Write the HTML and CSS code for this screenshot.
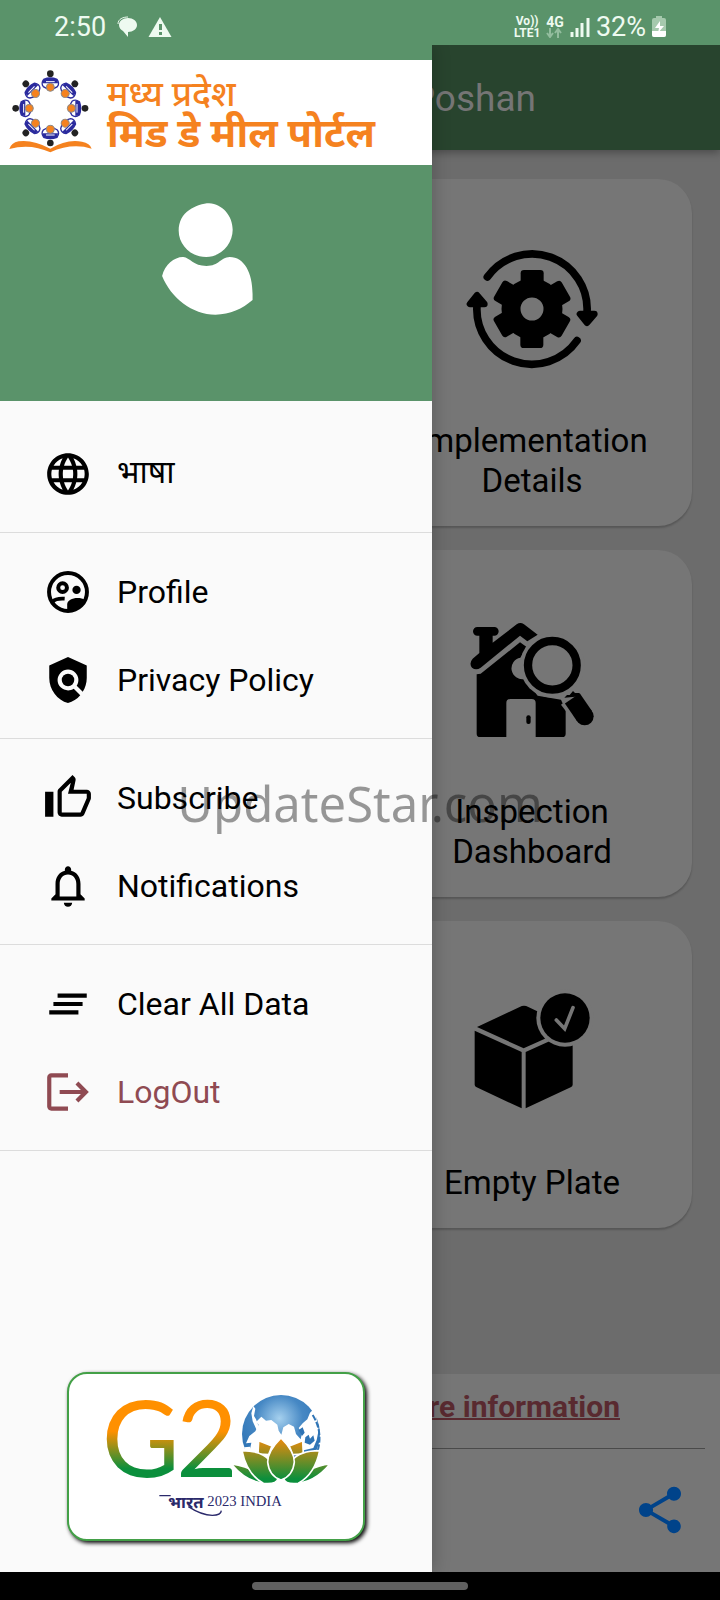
FILE: index.html
```
<!DOCTYPE html>
<html lang="en">
<head>
  <meta charset="UTF-8">
  <meta name="viewport" content="width=device-width, initial-scale=1.0">
  <title>Poshan</title>
  <link rel="stylesheet" href="styles.css">
</head>
<body>
  <!-- Status bar -->
  <div class="status-bar">
    <div class="status-left">
      <span class="clock">2:50</span>
      <svg class="status-icon" viewBox="0 0 22 22"><path d="M2 8C2 3 7 1 12 1" fill="none" stroke="#eefaf0" stroke-width="1"/><path d="M12 2c5 0 9 3 9 7s-4 7-9 7v5l-5-6c-2-1-4-3-4-6 0-4 4-7 9-7z" fill="#eefaf0"/></svg>
      <svg class="status-icon wide" viewBox="0 0 24 22"><path d="M12 1l11.500 20H.5z" fill="#eefaf0"/><path d="M11 8h3v6h-3zM11 16h3v3h-3z" fill="#5a936a"/></svg>
    </div>
    <div class="status-right">
      <span class="net">Vo))<br>LTE1</span>
      <span class="net net-4g">4G
        <svg viewBox="0 0 16 10"><path d="M4 0v8M1 5l3 4 3-4M12 10V2M9 5l3-4 3 4" fill="none" stroke="#93bd9e" stroke-width="2"/></svg>
      </span>
      <svg class="signal" viewBox="0 0 20 20"><path d="M2 15v5M7 11v9M12 6v14M18 1v19" stroke="#eefaf0" stroke-width="3"/></svg>
      <span class="percent">32%</span>
      <svg class="battery" viewBox="0 0 14 21"><path d="M4 0h6v2h2a2 2 0 0 1 2 2v15a2 2 0 0 1-2 2H2a2 2 0 0 1-2-2V4a2 2 0 0 1 2-2h2z" fill="#a5c9ad"/><path d="M0 15h14v4a2 2 0 0 1-2 2H2a2 2 0 0 1-2-2z" fill="#fff"/><path d="M8 5l-5 7h4l-1 5 6-7H8z" fill="#fff"/></svg>
    </div>
  </div>

  <div class="screen">
    <!-- Home page -->
    <header class="app-bar"><h1>Poshan</h1></header>

    <main class="cards">
      <a class="card" href="#">
        <svg viewBox="187 204 420 420">
          <g fill="none" stroke="#000" stroke-width="23" stroke-linecap="round">
            <path d="M263 318A165 165 0 0 1 562 425M532 509A165 165 0 0 1 232 403"/>
          </g>
          <path d="M541 429h43l-22 26zM211 399h43l-22-26z" stroke="#000" stroke-width="20" stroke-linejoin="round"/>
          <circle cx="397" cy="414" r="63" fill="none" stroke="#000" stroke-width="57"/>
          <g>
            <rect x="363" y="297" width="69" height="60" rx="10"/>
            <rect x="363" y="297" width="69" height="60" rx="10" transform="rotate(60 397 414)"/>
            <rect x="363" y="297" width="69" height="60" rx="10" transform="rotate(120 397 414)"/>
            <rect x="363" y="297" width="69" height="60" rx="10" transform="rotate(180 397 414)"/>
            <rect x="363" y="297" width="69" height="60" rx="10" transform="rotate(240 397 414)"/>
            <rect x="363" y="297" width="69" height="60" rx="10" transform="rotate(300 397 414)"/>
          </g>
        </svg>
        <span>Implementation Details</span>
      </a>
      <a class="card" href="#">
        <svg viewBox="187 207 420 420">
          <path d="M231 258h53a12 12 0 0 1 0 26h-5v21l72-55q11-8 22 0l41 31-31 20-22-17-118 96q-14 10-26 0-10-13 2-27l20-17v-52h-6a12 12 0 0 1 0-26z"/>
          <path d="M231 400l12-2 118-94 20 14-19 32a32 32 0 1 0 12 64l40 50 70 12 14 32v70q0 10-10 10h-80V486q0-12-12-12h-64q-12 0-12 12v102h-79q-10 0-10-10z"/>
          <rect x="380" y="523" width="13" height="26" rx="6"/>
          <circle cx="458" cy="373" r="97" fill="#767676"/>
          <circle cx="458" cy="373" r="73" fill="none" stroke="#000" stroke-width="25"/>
          <path d="M512 470l43 57" stroke="#767676" stroke-width="70"/>
          <path d="M518 472l37 54" stroke="#000" stroke-width="54"/>
          <circle cx="555" cy="526" r="27"/>
          <path d="M494 470l8-8 8 0 10-12 6 6 12 0 6 10z"/>
        </svg>
        <span>Inspection Dashboard</span>
      </a>
      <a class="card" href="#">
        <svg viewBox="187 210 420 420">
          <path d="M232 348l128-60q13-7 26 0l80 38v44l-94 42z"/>
          <path d="M225 359l141 64v169l-135-63q-6-3-6-8zM378 423l141-64v162q0 5-6 8l-135 63z"/>
          <circle cx="496" cy="321" r="86" fill="#767676"/>
          <circle cx="496" cy="321" r="74"/>
          <path d="M470 327l25 26 25-63" fill="none" stroke="#767676" stroke-width="11" stroke-linecap="round"/>
        </svg>
        <span>Empty Plate</span>
      </a>
    </main>

    <footer class="footer">
      <a class="more" href="#">more information</a>
      <button class="share" aria-label="Share">
        <svg viewBox="0 0 24 24"><path d="M18 16.080c-.76 0-1.440.3-1.960.77L8.910 12.700c.05-.23.09-.46.09-.7s-.04-.47-.09-.7l7.050-4.110c.54.5 1.250.81 2.040.81 1.660 0 3-1.340 3-3s-1.340-3-3-3-3 1.340-3 3c0 .24.04.47.09.7L8.040 9.810C7.500 9.310 6.790 9 6 9c-1.660 0-3 1.340-3 3s1.340 3 3 3c.79 0 1.500-.31 2.040-.81l7.120 4.160c-.05.21-.08.43-.08.65 0 1.610 1.310 2.920 2.920 2.920 1.610 0 2.920-1.310 2.920-2.920s-1.310-2.920-2.920-2.920z"/></svg>
      </button>
    </footer>

    <!-- Side drawer -->
    <aside class="drawer">
      <div class="brand">
        <svg class="emblem" viewBox="24 204 258 258">
          <defs>
            <g id="pupil">
              <circle cx="151" cy="221" r="10" fill="#222"/>
              <path d="M130 236q21-8 42 0l2 14h-46z" fill="#2b2b9e"/>
              <path d="M131 238q-9 12-1 22l11 6M171 238q9 12 1 22l-11 6" fill="none" stroke="#2b2b9e" stroke-width="4"/>
              <path d="M138 245h26" stroke="#fff" stroke-width="3"/>
              <circle cx="151" cy="262" r="12" fill="#f5821f" stroke="#8a8a8a" stroke-width="3"/>
            </g>
          </defs>
          <use href="#pupil"/>
          <use href="#pupil" transform="rotate(45 151 325)"/>
          <use href="#pupil" transform="rotate(90 151 325)"/>
          <use href="#pupil" transform="rotate(135 151 325)"/>
          <use href="#pupil" transform="rotate(180 151 325)"/>
          <use href="#pupil" transform="rotate(225 151 325)"/>
          <use href="#pupil" transform="rotate(270 151 325)"/>
          <use href="#pupil" transform="rotate(315 151 325)"/>
          <path d="M28 447q5-18 28-23 42-6 95 22 50-30 95-21 24 4 29 21-60-18-124 11-60-28-123-10z" fill="#f5821f"/>
        </svg>
        <div class="brand-text" lang="hi">
          <span class="state">मध्य प्रदेश</span>
          <span class="portal">मिड डे मील पोर्टल</span>
        </div>
      </div>

      <div class="account">
        <svg viewBox="66 68 274 338">
          <path d="M208 69c40 2 71 38 71 80s-34 82-80 82-83-36-83-80c0-26 12-50 32-62 18-12 42-20 60-20z" fill="#fff"/>
          <path d="M66 288c8-34 38-58 64-57 20 2 30 27 70 27 38 0 42-26 70-27 44 0 69 48 69 112v18c-30 26-68 44-112 44-70 0-135-52-161-117z" fill="#fff"/>
        </svg>
      </div>

      <nav class="menu">
        <ul class="group first">
          <li><a href="#">
            <svg viewBox="0 0 24 24"><path d="M11.990 2C6.470 2 2 6.480 2 12s4.470 10 9.990 10C17.520 22 22 17.520 22 12S17.520 2 11.990 2zm6.930 6h-2.950c-.32-1.250-.78-2.450-1.380-3.560 1.840.63 3.370 1.910 4.330 3.560zM12 4.040c.83 1.200 1.480 2.530 1.910 3.960h-3.820c.43-1.430 1.080-2.760 1.910-3.960zM4.260 14C4.100 13.360 4 12.690 4 12s.1-1.360.26-2h3.380c-.08.66-.14 1.320-.14 2 0 .68.06 1.340.14 2H4.260zm.82 2h2.950c.32 1.250.78 2.450 1.380 3.560-1.840-.63-3.370-1.900-4.330-3.560zm2.950-8H5.080c.96-1.660 2.490-2.930 4.330-3.560C8.810 5.550 8.350 6.750 8.030 8zM12 19.960c-.83-1.200-1.480-2.530-1.910-3.960h3.820c-.43 1.430-1.080 2.760-1.910 3.960zM14.340 14H9.660c-.09-.66-.16-1.320-.16-2 0-.68.07-1.350.16-2h4.680c.09.65.16 1.320.16 2 0 .68-.07 1.340-.16 2zm.25 5.560c.6-1.110 1.060-2.310 1.380-3.560h2.950c-.96 1.650-2.490 2.930-4.330 3.560zM16.360 14c.08-.66.14-1.320.14-2 0-.68-.06-1.340-.14-2h3.380c.16.64.26 1.310.26 2s-.1 1.360-.26 2h-3.380z"/></svg>
            <span class="hindi" lang="hi">भाषा</span></a></li>
        </ul>
        <ul class="group">
          <li><a href="#">
            <svg viewBox="0 0 24 24"><circle cx="12" cy="12" r="9.100" fill="none" stroke="#000" stroke-width="1.900"/><circle cx="9.400" cy="9.900" r="2.100" fill="none" stroke="#000" stroke-width="1.900"/><circle cx="16.100" cy="11" r="2"/><path d="M4.500 16.600c1-1 3-1.600 5.900-1.400" fill="none" stroke="#000" stroke-width="1.800"/><path d="M11.600 21.500V18c0-1.900 2.400-3.100 5-3.100 1.300 0 2.600.3 3.600.9-1.200 3.700-4.700 5.700-8.600 5.700z"/></svg>
            <span>Profile</span></a></li>
          <li><a href="#">
            <svg viewBox="0 0 24 24"><path d="M21 5l-9-4-9 4v6c0 5.550 3.840 10.740 9 12 2.300-.56 4.330-1.900 5.880-3.710l-3.120-3.120c-1.940 1.290-4.580 1.070-6.290-.64-1.950-1.950-1.950-5.120 0-7.070 1.950-1.950 5.120-1.950 7.070 0 1.710 1.710 1.920 4.350.64 6.290l2.900 2.900C20.290 15.690 21 13.380 21 11V5z"/><circle cx="12" cy="12" r="3"/></svg>
            <span>Privacy Policy</span></a></li>
        </ul>
        <ul class="group">
          <li><a href="#">
            <svg viewBox="0 0 24 24"><path d="M9 21h9c.83 0 1.540-.5 1.840-1.220l3.020-7.050c.09-.23.14-.47.14-.73v-2c0-1.100-.9-2-2-2h-6.310l.95-4.570.03-.32c0-.41-.17-.79-.44-1.060L14.170 1 7.580 7.590C7.220 7.950 7 8.450 7 9v10c0 1.100.9 2 2 2zM9 9l4.340-4.340L12 10h9v2l-3 7H9V9zM1 9h4v12H1z"/></svg>
            <span>Subscribe</span></a></li>
          <li><a href="#">
            <svg viewBox="0 0 24 24"><path d="M12 22c1.100 0 2-.9 2-2h-4c0 1.100.9 2 2 2zm6-6v-5c0-3.070-1.630-5.640-4.500-6.320V4c0-.83-.67-1.500-1.500-1.500s-1.500.67-1.500 1.500v.68C7.640 5.360 6 7.920 6 11v5l-2 2v1h16v-1l-2-2zm-2 1H8v-6c0-2.480 1.510-4.500 4-4.500s4 2.020 4 4.500v6z"/></svg>
            <span>Notifications</span></a></li>
        </ul>
        <ul class="group">
          <li><a href="#">
            <svg viewBox="0 0 24 24"><path d="M5 13h14v-2H5v2zm-2 4h14v-2H3v2zM7 7v2h14V7H7z"/></svg>
            <span>Clear All Data</span></a></li>
          <li><a class="logout" href="#">
            <svg viewBox="0 0 24 24"><path d="M12 5V3H4c-1.100 0-2 .9-2 2v14c0 1.100.9 2 2 2h8v-2H4V5zM17 7l-1.400 1.400 2.600 2.600H8v2h10.200l-2.600 2.600L17 17l5-5z"/></svg>
            <span>LogOut</span></a></li>
        </ul>
      </nav>

      <div class="g20">
        <svg viewBox="87 72 882 495">
          <defs>
            <linearGradient id="flag" gradientUnits="userSpaceOnUse" x1="0" y1="150" x2="0" y2="384">
              <stop offset="0.400" stop-color="#ff9000"/>
              <stop offset="0.880" stop-color="#0b8f3c"/>
            </linearGradient>
            <linearGradient id="petal" gradientUnits="userSpaceOnUse" x1="0" y1="265" x2="0" y2="400">
              <stop offset="0" stop-color="#ef8a0c"/>
              <stop offset="0.900" stop-color="#0b8f3c"/>
            </linearGradient>
            <radialGradient id="sea" cx="0.480" cy="0.300" r="0.600">
              <stop offset="0" stop-color="#a5d0ee"/>
              <stop offset="0.500" stop-color="#4688c4"/>
              <stop offset="1" stop-color="#2f74b5"/>
            </radialGradient>
          </defs>
          <text class="g20-text" x="185" y="381" fill="url(#flag)">G</text>
          <text class="g20-text" x="408" y="381" fill="url(#flag)">2</text>
          <circle cx="723" cy="252" r="117" fill="url(#sea)"/>
          <g fill="#fff">
            <path d="M640 168l6 8-4 22 6 10 10 26-8 6-12-26-4-24z"/>
            <path d="M664 200l14 12 16-2 18 14 4 18 8 12 6-22 16-10 16 8 6 22 14 16 4-18-10-16 12-14 14-12 8-20 12-12 8 30 6 34-6 30-10 24-170 40-20-36 4-20-16 2 10-22 18-14 10-20-8-8z"/>
            <path d="M612 292l18-2 10 26-14 10z"/>
          </g>
          <path d="M796 262l10-8 4 12 10-10 4 16-14 12-16-6zM776 240l12-8 6 16-8 10z" fill="#2f74b5"/>
          <path d="M818 195q32 51 14 111" fill="none" stroke="#2f74b5" stroke-width="6" stroke-dasharray="18 5"/>
          <g fill="url(#petal)" stroke="#fff" stroke-width="5">
            <path d="M656 272l40 16-10 26-32-2zM788 272l-40 16 10 26 32-2z"/>
            <path d="M574 342q70 8 112 58-62 2-112-58zM870 342q-70 8-112 58 62 2 112-58z"/>
            <path d="M606 302q60 0 84 30 10 20 24 54-4 18-44 14-50-28-64-98zM839 302q-60 0-84 30-10 20-24 54 4 18 44 14 50-28 64-98z"/>
            <path d="M723 264q-40 40-40 72 4 42 40 54 36-12 40-54 0-32-40-72z"/>
          </g>
          <text class="g20-hindi" x="384" y="473">भारत</text>
          <path d="M358 437h34M445 470q40 26 72 26 26 0 27-14" fill="none" stroke="#2b2a6b" stroke-width="4"/>
          <text class="g20-sub" x="502" y="467">2023 INDIA</text>
        </svg>
      </div>
    </aside>

    <div class="watermark">UpdateStar.com</div>
  </div>

  <div class="gesture-bar"><span></span></div>
</body>
</html>
```
FILE: styles.css
```
* {
  box-sizing: border-box;
}
body {
  margin: 0;
  min-height: 100vh;
  display: flex;
  flex-direction: column;
  font-family: Roboto, "Noto Sans", sans-serif;
  background-color: #6c6c6c;
  color: #000;
}
svg {
  display: block;
}
a {
  color: inherit;
  text-decoration: none;
}
/* Status bar */
.status-bar {
  height: 45px;
  padding: 8px 54px 0;
  display: flex;
  justify-content: space-between;
  background-color: #5a936a;
  color: #eefaf0;
}
.status-left, .status-right {
  display: flex;
  align-items: center;
}
.status-left {
  gap: 10px;
}
.status-right {
  gap: 6px;
}
.clock, .percent {
  font-size: 27px;
}
.status-icon {
  width: 22px;
  height: 22px;
}
.status-icon.wide {
  width: 24px;
}
.net {
  font-size: 12px;
  line-height: 12px;
  font-weight: bold;
  text-align: center;
}
.net-4g {
  font-size: 14px;
}
.net-4g svg {
  width: 16px;
  height: 10px;
}
.signal {
  width: 20px;
  height: 20px;
}
.battery {
  width: 14px;
  height: 21px;
}
/* Home page, dimmed behind the drawer */
.screen {
  position: relative;
  flex: 1;
  display: flex;
  flex-direction: column;
  overflow: hidden;
}
.app-bar {
  height: 105px;
  padding: 2px 184px 0 0;
  display: flex;
  align-items: center;
  justify-content: flex-end;
  background-color: #28442e;
  box-shadow: 0 3px 8px rgba(0, 0, 0, 0.3);
}
.app-bar h1 {
  margin: 0;
  font-size: 37px;
  font-weight: normal;
  color: #757575;
}
.cards {
  flex: 1;
  padding: 29px 28px;
  display: grid;
  grid-template-columns: 1fr 1fr;
  align-content: start;
  gap: 24px;
}
.card {
  grid-column: 2;
  padding: 60px 24px 25px;
  display: flex;
  flex-direction: column;
  align-items: center;
  gap: 42px;
  border-radius: 34px;
  background-color: #767676;
  box-shadow: 0 2px 2px rgba(0, 0, 0, 0.2);
  font-size: 33px;
  line-height: 40px;
  text-align: center;
}
.card svg {
  width: 140px;
  height: 140px;
}
.footer {
  padding: 0 15px 34px;
  display: flex;
  flex-direction: column;
  align-items: flex-end;
  background-color: #767676;
}
.more {
  width: 100%;
  padding: 13px 85px 21px 0;
  border-bottom: 1px solid #4a4a4a;
  font-size: 30px;
  line-height: 40px;
  font-weight: bold;
  text-align: right;
  text-decoration: underline;
  text-decoration-thickness: 2px;
  color: #592a30;
}
.share {
  margin: 33px 17px 0 0;
  padding: 0;
  border: none;
  background: none;
  cursor: pointer;
}
.share svg {
  width: 56px;
  height: 56px;
  fill: #00438a;
}
/* Drawer */
.drawer {
  position: absolute;
  top: 0;
  bottom: 0;
  left: 0;
  width: 60%;
  padding-top: 15px;
  display: flex;
  flex-direction: column;
  background: linear-gradient(#5a936a 15px, #fafafa 15px);
  box-shadow: 2px 0 16px rgba(0, 0, 0, 0.2);
}
.brand {
  height: 105px;
  padding: 8px;
  display: flex;
  gap: 13px;
  background-color: #fff;
}
.emblem {
  width: 86px;
  height: 86px;
}
.brand-text {
  padding-top: 9px;
  display: flex;
  flex-direction: column;
  white-space: nowrap;
  color: #f5821f;
}
.state {
  font-size: 35px;
  line-height: 36px;
  font-weight: 500;
}
.portal {
  font-size: 40px;
  line-height: 42px;
  font-weight: bold;
}
.account {
  height: 236px;
  padding: 38px 18px 0 0;
  display: flex;
  justify-content: center;
  background-color: #5a936a;
}
.account svg {
  width: 91px;
  height: 112px;
}
.group {
  margin: 0;
  padding: 15px 0 14px;
  list-style: none;
  border-bottom: 1px solid #dcdcdc;
}
.group.first {
  padding-top: 29px;
}
.group a {
  height: 88px;
  padding-left: 43px;
  display: flex;
  align-items: center;
  gap: 24px;
  font-size: 32px;
}
.group svg {
  width: 50px;
  height: 50px;
}
.group .hindi {
  padding-bottom: 8px;
}
.group .logout {
  color: #8f4a52;
  fill: #8f4a52;
}
.g20 {
  width: 298px;
  margin: auto auto 31px;
  border: 2px solid #43a047;
  border-radius: 20px;
  background-color: #fff;
  box-shadow: 2px 2px 4px #000;
}
.g20-text {
  font-family: Lato, sans-serif;
  font-size: 320px;
}
.g20-hindi {
  font-size: 50px;
  font-weight: bold;
  fill: #2b2a6b;
}
.g20-sub {
  font-family: "Liberation Serif", serif;
  font-size: 44px;
  fill: #2b2a6b;
}
.watermark {
  position: absolute;
  top: 725px;
  left: 0;
  right: 0;
  font-family: "Noto Sans", sans-serif;
  font-size: 49px;
  text-align: center;
  color: rgba(0, 0, 0, 0.4);
  pointer-events: none;
}
/* Gesture bar */
.gesture-bar {
  height: 28px;
  display: flex;
  justify-content: center;
  align-items: center;
  background-color: #000;
}
.gesture-bar span {
  width: 30%;
  height: 8px;
  border-radius: 4px;
  background-color: #606060;
}
```
